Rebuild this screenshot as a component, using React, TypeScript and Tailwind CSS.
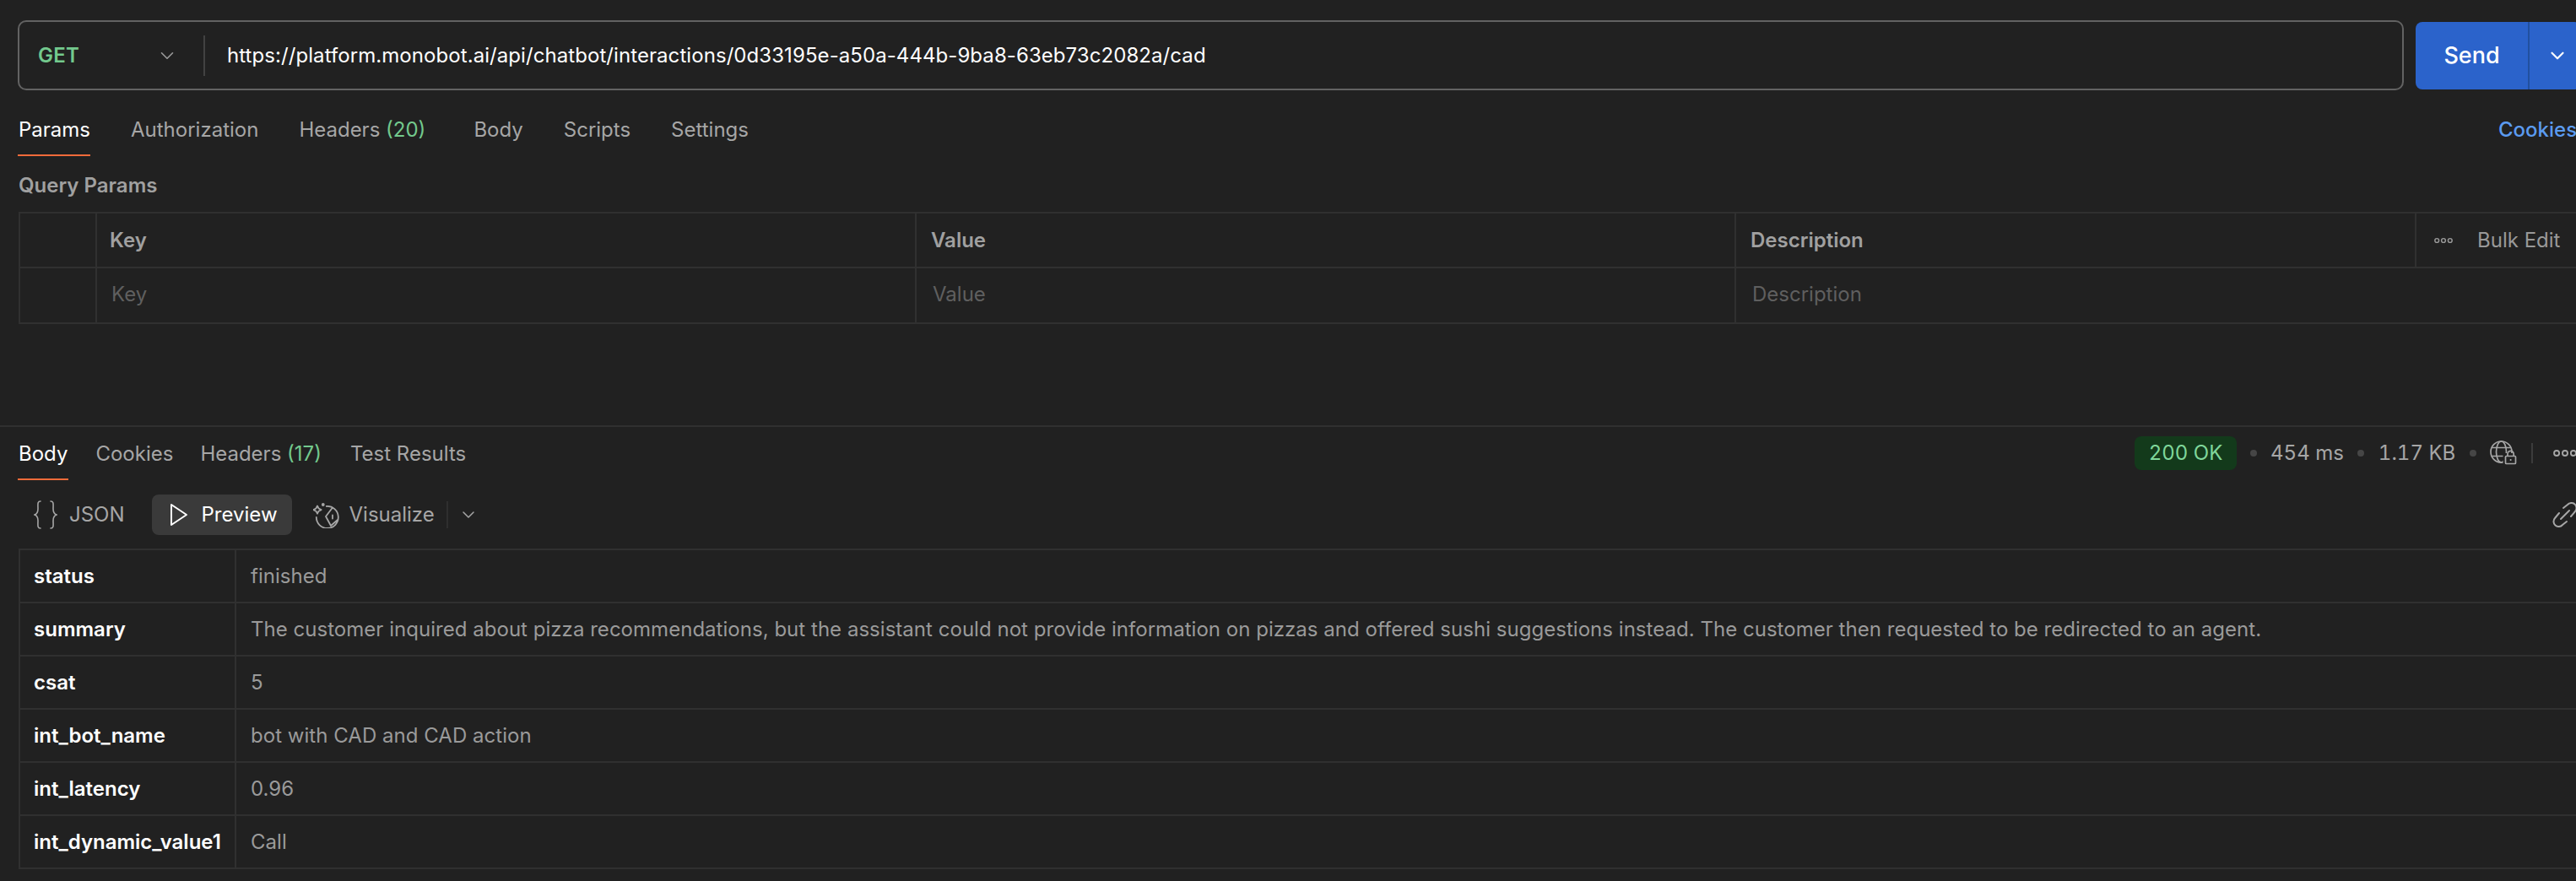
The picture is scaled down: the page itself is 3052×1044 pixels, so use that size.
import { ChevronDown } from 'lucide-react';

const rows = [
  { k: 'status', v: 'finished' },
  { k: 'summary', v: 'The customer inquired about pizza recommendations, but the assistant could not provide information on pizzas and offered sushi suggestions instead. The customer then requested to be redirected to an agent.' },
  { k: 'csat', v: '5' },
  { k: 'int_bot_name', v: 'bot with CAD and CAD action' },
  { k: 'int_latency', v: '0.96' },
  { k: 'int_dynamic_value1', v: 'Call' },
];

function Dots({ className }: { className?: string }) {
  return (
    <svg viewBox="0 0 24 8" className={className} fill="none" stroke="currentColor" strokeWidth="1.6">
      <circle cx="3.5" cy="4" r="2.6" />
      <circle cx="12" cy="4" r="2.6" />
      <circle cx="20.5" cy="4" r="2.6" />
    </svg>
  );
}

function Sep() {
  return <span className="block shrink-0 w-[8px] h-[8px] rounded-full bg-[#464646]" />;
}

export default function App() {
  return (
    <div className="w-[3052px] h-[1044px] overflow-hidden bg-[#212121] text-[24px] text-[#a6a6a6] font-['Inter',sans-serif] leading-[32px]">
      {/* url bar */}
      <div className="flex items-center gap-[14px] pl-[21px] pt-[24px] w-[3100px]">
        <div className="w-[2827px] h-[83px] shrink-0 flex items-center rounded-[10px] border-2 border-[#626262]">
          <div className="w-[220px] h-[48px] flex items-center justify-between pl-[22px] pr-[30px] border-r-2 border-[#424242] shrink-0">
            <span className="text-[#73c98d] font-semibold tracking-[0.2px]">GET</span>
            <ChevronDown className="w-[26px] h-[26px] text-[#9a9a9a]" strokeWidth={1.5} />
          </div>
          <span className="ml-[26px] text-white tracking-[0.07px]">https://platform.monobot.ai/api/chatbot/interactions/0d33195e-a50a-444b-9ba8-63eb73c2082a/cad</span>
        </div>
        <div className="w-[196px] h-[80px] shrink-0 flex rounded-[8px] bg-[#2b63cb] text-white">
          <div className="w-[135px] flex items-center justify-center border-r-2 border-[#22509f] font-medium text-[27px]">Send</div>
          <div className="pl-[20px] flex items-center"><ChevronDown className="w-[26px] h-[26px]" strokeWidth={2} /></div>
        </div>
      </div>

      {/* request tabs */}
      <div className="flex items-center justify-between h-[62px] mt-[16px] pl-[21px] w-[3100px]">
        <div className="flex gap-[48px]">
          <span className="relative text-white pl-[1px]">
            Params
            <span className="absolute left-0 right-0 top-[45px] h-[2px] bg-[#f26b3a]" />
          </span>
          <span>Authorization</span>
          <span className="mr-[9px]">Headers <span className="text-[#73c98d]">(20)</span></span>
          <span>Body</span>
          <span>Scripts</span>
          <span>Settings</span>
        </div>
        <span className="text-[#5b9bf0] font-medium mr-[32px] w-[108px]">Cookies</span>
      </div>

      <div className="pl-[22px] mt-[19px] h-[32px] font-semibold text-[#a0a0a0]">Query Params</div>

      {/* params table */}
      <div className="ml-[22px] mt-[15px] w-[3060px] border-y-2 border-l-2 border-[#303030] text-[#a0a0a0]">
        <div className="grid grid-cols-[91px_971px_971px_806px_1fr] h-[65px] border-b-2 border-[#303030] items-stretch">
          <div className="border-r-2 border-[#303030]" />
          <div className="border-r-2 border-[#303030] flex items-center pl-[15px] font-semibold">Key</div>
          <div className="border-r-2 border-[#303030] flex items-center pl-[17px] font-semibold">Value</div>
          <div className="border-r-2 border-[#303030] flex items-center pl-[17px] font-semibold">Description</div>
          <div className="flex items-center pl-[21px] gap-[29px] text-[#999]">
            <Dots className="w-[22px] h-[8px]" />
            <span>Bulk Edit</span>
          </div>
        </div>
        <div className="grid grid-cols-[91px_971px_971px_1fr] h-[64px] items-stretch text-[#5f5f5f]">
          <div className="border-r-2 border-[#303030]" />
          <div className="border-r-2 border-[#303030] flex items-center pl-[17px] pb-[3px]">Key</div>
          <div className="border-r-2 border-[#303030] flex items-center pl-[19px] pb-[3px]">Value</div>
          <div className="flex items-center pl-[19px] pb-[3px]">Description</div>
        </div>
      </div>

      <div className="mt-[120px] h-[2px] bg-[#303030]" />

      {/* response tabs */}
      <div className="flex items-center justify-between h-[62px] pl-[21px] w-[3100px]">
        <div className="flex gap-[32px] pt-[1px]">
          <span className="relative text-white px-[1px]">
            Body
            <span className="absolute left-0 right-0 top-[45px] h-[2px] bg-[#f26b3a]" />
          </span>
          <span>Cookies</span>
          <span className="mr-[2px]">Headers <span className="text-[#73c98d]">(17)</span></span>
          <span>Test Results</span>
        </div>
        <div className="flex items-center w-[571px] shrink-0 tabular-nums">
          <span className="w-[121px] h-[40px] rounded-[8px] bg-[#133a1b] text-[#7fd69a] flex items-center justify-center">200 OK</span>
          <span className="ml-[16px]"><Sep /></span>
          <span className="ml-[16px]">454 ms</span>
          <span className="ml-[16px]"><Sep /></span>
          <span className="ml-[17px]">1.17 KB</span>
          <span className="ml-[17px]"><Sep /></span>
          <svg viewBox="0 0 32 32" className="ml-[16px] w-[32px] h-[32px] shrink-0" fill="none" stroke="currentColor" strokeWidth="1.7">
            <circle cx="13.5" cy="14.5" r="12.5" />
            <ellipse cx="13.5" cy="14.5" rx="6" ry="12.5" />
            <path d="M2.5 9.5h22M2.5 19.5h22" />
            <rect x="15.5" y="16" width="17" height="16" fill="#212121" stroke="none" />
            <rect x="18.5" y="19.5" width="12" height="9" rx="1" />
            <path d="M21 19.5V17a3.6 3.6 0 0 1 7.2 0v2.5M24.6 23v2" />
          </svg>
          <span className="ml-[17px] w-[2px] h-[24px] bg-[#3c3c3c]" />
          <Dots className="ml-[24px] w-[28px] h-[10px] shrink-0" />
        </div>
      </div>

      {/* view switcher */}
      <div className="flex items-center justify-between h-[48px] mt-[18px] w-[3100px] pl-[40px]">
        <div className="flex items-center">
          <svg viewBox="0 0 28 36" className="w-[28px] h-[36px]" fill="none" stroke="currentColor" strokeWidth="1.6" strokeLinecap="round">
            <path d="M8 2C4 2 5 6 5 11c0 4-1 6-4 7 3 1 4 3 4 7 0 5-1 9 3 9M20 2c4 0 3 4 3 9 0 4 1 6 4 7-3 1-4 3-4 7 0 5 1 9-3 9" />
          </svg>
          <span className="ml-[14px]">JSON</span>
          <div className="ml-[32px] w-[166px] h-[48px] rounded-[8px] bg-[#3a3a3a] flex items-center pl-[21px] text-white">
            <svg viewBox="0 0 22 28" className="w-[22px] h-[28px]" fill="none" stroke="currentColor" strokeWidth="2" strokeLinejoin="round">
              <path d="M2 2v24l18-12z" />
            </svg>
            <span className="ml-[16px]">Preview</span>
          </div>
          <svg viewBox="0 0 32 32" className="ml-[25px] w-[32px] h-[32px] shrink-0" fill="none" stroke="currentColor" strokeWidth="1.8" strokeLinejoin="round" strokeLinecap="round">
            <path d="M5 5.5l1.6 3 3 1.6-3 1.6L5 14.7l-1.6-3-3-1.6 3-1.6z" />
            <circle cx="11.8" cy="4" r="1" />
            <path d="M3.8 19a13 13 0 1 0 12-13M23 7.5L15 18l6 11M29 22l-8 7M23 16.5v4" />
          </svg>
          <span className="ml-[11px]">Visualize</span>
          <span className="ml-[14px] w-[2px] h-[32px] bg-[#2f2f2f]" />
          <ChevronDown className="ml-[12px] w-[24px] h-[24px]" strokeWidth={1.5} />
        </div>
        <svg viewBox="0 0 30 30" className="mr-[46px] w-[30px] h-[30px] text-[#a6a6a6]" fill="none" stroke="currentColor" strokeWidth="2" strokeLinecap="round">
          <path d="M13 7l5-4a6 6 0 0 1 9 8l-5 6M17 23l-5 4a6 6 0 0 1-9-8l5-6M10 20l10-10" />
        </svg>
      </div>

      {/* response table */}
      <div className="ml-[22px] mt-[16px] w-[3060px] border-t-2 border-l-2 border-[#303030]">
        {rows.map((r) => (
          <div key={r.k} className="grid grid-cols-[256px_1fr] h-[63px] border-b-2 border-[#303030]">
            <div className="border-r-2 border-[#303030] flex items-center pl-[16px] font-semibold text-white">{r.k}</div>
            <div className="flex items-center pl-[17px] whitespace-nowrap text-[#9a9a9a] tracking-[0.03px]">{r.v}</div>
          </div>
        ))}
      </div>
    </div>
  );
}
